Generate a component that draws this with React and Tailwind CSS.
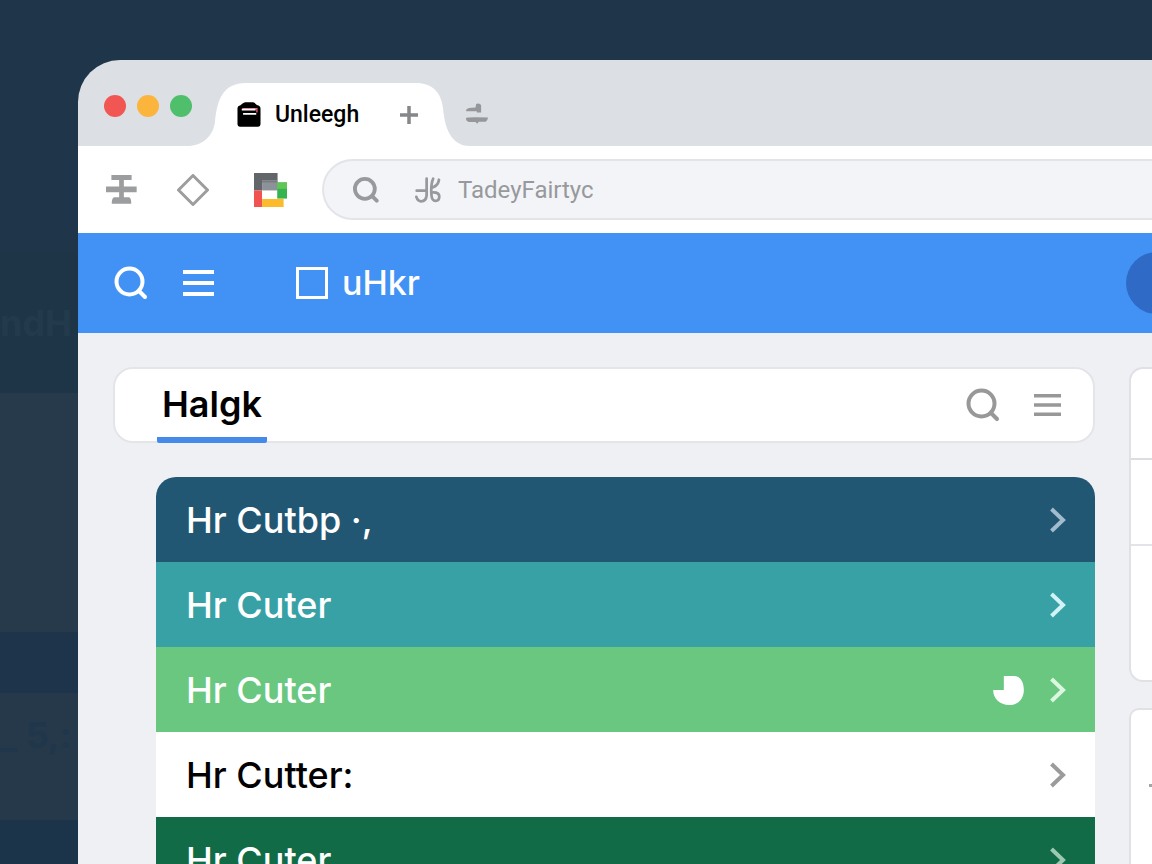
import React from 'react';
import clsx from 'clsx';

const SearchIcon = ({ className, strokeWidth = 4 }) => (
    <svg viewBox="0 0 34 34" fill="none" stroke="currentColor" strokeWidth={strokeWidth} strokeLinecap="round" className={className}>
        <circle cx="15.5" cy="15.5" r="13" />
        <path d="M25 25l6 6" />
    </svg>
);

const MenuIcon = ({ className }) => (
    <svg viewBox="0 0 30 26" fill="currentColor" preserveAspectRatio="none" className={className}>
        <path d="M0 0h30v4H0zM0 11h30v4H0zM0 22h30v4H0z" />
    </svg>
);

const ChevronIcon = ({ className }) => (
    <svg viewBox="0 0 16 26" fill="none" stroke="currentColor" strokeWidth="4" className={className}>
        <path d="M1.5 2L13 13 1.5 24" />
    </svg>
);

const PieIcon = () => (
    <svg viewBox="0 0 92 87" fill="currentColor" className="w-[31px] h-[29px] text-white">
        <path d="M32 0h30c18 0 30 16 30 42 0 28-18 45-44 45C20 87 0 68 0 42h32z" />
    </svg>
);

const rows = [
    { label: 'Hr Cutbp ·,', row: 'bg-[#225773] text-white', chevron: 'text-[#a2bbce]' },
    { label: 'Hr Cuter', row: 'bg-[#37a1a6] text-white', chevron: 'text-[#d3f2f5]' },
    { label: 'Hr Cuter', row: 'bg-[#69c780] text-white', chevron: 'text-[#dcf7df]', pie: true },
    { label: 'Hr Cutter:', row: 'bg-white text-black', chevron: 'text-[#9b9b9b]' },
    { label: 'Hr Cuter', row: 'bg-[#116b46] text-white', chevron: 'text-[#9dc8b2]' },
];

const Backdrop = () => (
    <aside className="w-[78px] shrink-0 overflow-hidden flex flex-col font-bold text-[36px] leading-none whitespace-nowrap" aria-hidden="true">
        <div className="h-[252px] shrink-0" />
        <div className="h-[141px] shrink-0 bg-[#1e3447] flex items-center text-[#233a4d]">ndH</div>
        <div className="h-[239px] shrink-0 bg-[#273a4b]" />
        <div className="h-[61px] shrink-0 bg-[#1d344b]" />
        <div className="h-[127px] shrink-0 bg-[#25394a] pt-6 text-[#20364a]">_ 5,:</div>
        <div className="grow bg-[#1b344a]" />
    </aside>
);

const TabStrip = () => (
    <div className="h-[86px] shrink-0 flex items-end bg-[#dcdfe3] rounded-tl-[42px]">
        <div className="h-[80px] w-[109px] shrink-0 pl-[26px] flex items-center gap-[11px]">
            <button aria-label="Close" className="w-[22px] h-[22px] shrink-0 rounded-full bg-[#f25653]" />
            <button aria-label="Minimize" className="w-[22px] h-[22px] shrink-0 rounded-full bg-[#fbb53c]" />
            <button aria-label="Maximize" className="w-[22px] h-[22px] shrink-0 rounded-full bg-[#4fbf6b]" />
        </div>

        {/* Active tab */}
        <div className="relative w-[283px] h-[63px] shrink-0">
            <svg viewBox="0 0 283 63" fill="#fff" className="absolute inset-0 w-full h-full">
                <path d="M0 63C16 63 26 53 28 39 30 17 36 0 59 0H229C245 0 254 9 256 25 258 50 267 63 283 63z" />
            </svg>
            <div className="relative h-full pl-[50px] flex items-center">
                <svg viewBox="0 0 72 76" className="w-6 h-[25px] shrink-0">
                    <path d="M1 18Q1 12 10 10 18 2 24 1H48Q54 2 60 9 71 11 71 20V68Q71 75 64 75H8Q1 75 1 68z" fill="#000" />
                    <path d="M16 20H60V32" fill="none" stroke="#e8607c" strokeWidth="4" />
                    <path d="M14 23H56M18 36H58" stroke="#fff" strokeWidth="5" />
                </svg>
                <span className="ml-[14px] w-[82px] font-['Roboto',sans-serif] font-medium text-[23px] leading-8 text-black">Unleegh</span>
                <button aria-label="New tab" className="ml-[43px] text-[#858789]">
                    <svg viewBox="0 0 18 18" stroke="currentColor" strokeWidth="3.5" className="w-[18px] h-[18px]">
                        <path d="M9 0v18M0 9h18" />
                    </svg>
                </button>
            </div>
        </div>
        <button aria-label="Tab options" className="-ml-1 h-[66px] text-[#95979a]">
            <svg viewBox="0 0 67 62" fill="currentColor" className="w-[22px] h-[21px]">
                <path d="M0 20Q5 13 29 13L31 2Q38-2 46 5V28H33V24H1zM0 44Q8 41 67 43 66 52 60 56H39L34 62 29 57H8Q0 54 0 48z" />
            </svg>
        </button>
    </div>
);

const AddressBar = () => (
    <div className="h-[87px] shrink-0 bg-white pl-7 flex items-center">
        <button aria-label="Split view" className="shrink-0 text-[#9b9d9f]">
            <svg viewBox="0 0 92 86" fill="currentColor" className="w-[31px] h-[29px]">
                <path d="M16 0H76V15H53V34H91V51H53V66H68Q75 67 75 85H17Q17 67 25 66H39V51H0V34H39V15H16z" />
            </svg>
        </button>
        <button aria-label="Bookmark" className="ml-10 shrink-0 text-[#9b9d9f]">
            <svg viewBox="0 0 32 32" fill="none" stroke="currentColor" strokeWidth="3" strokeLinejoin="round" className="w-8 h-8">
                <path d="M16 1.5L30.5 16 16 30.5 1.5 16z" />
            </svg>
        </button>
        <button aria-label="Apps" className="ml-[45px] shrink-0">
            <svg viewBox="0 0 98 101" className="w-[33px] h-[34px]">
                <path d="M0 0H70V23H24V52H0z" fill="#626569" />
                <path d="M24 23H70V52H24z" fill="#8c9297" />
                <path d="M24 23H70V28H24z" fill="#777c81" />
                <path d="M0 52H24V101H0z" fill="#f05350" />
                <path d="M24 77H88V101H24z" fill="#fcbb2c" />
                <path d="M69 28H98V76H69z" fill="#35b34e" />
                <path d="M69 28H98V47H69z" fill="#61c456" />
                <path d="M24 53H68V77H24z" fill="#fff" />
            </svg>
        </button>
        <div className="ml-[35px] h-[61px] grow min-w-0 pl-[29px] flex items-center rounded-l-full border-2 border-r-0 border-[#e2e4e7] bg-[#f3f4f7] text-[#97999c]">
            <SearchIcon className="w-[26px] h-[26px] shrink-0" strokeWidth={5} />
            <svg viewBox="0 0 76 76" fill="none" stroke="currentColor" strokeWidth="8" strokeLinecap="round" className="ml-9 w-[26px] h-[26px] shrink-0">
                <path d="M34 5V54Q32 71 18 71 8 71 4 58M5 40H34M53 5Q46 20 48 52 49 70 60 70 71 69 71 56 70 45 54 45M70 8Q68 24 53 30" />
            </svg>
            <input
                type="text"
                aria-label="Address"
                defaultValue="TadeyFairtyc"
                className="ml-[17px] grow min-w-0 bg-transparent outline-none font-['Roboto',sans-serif] text-[24px] leading-8"
            />
        </div>
    </div>
);

const AppHeader = () => (
    <header className="h-[100px] shrink-0 bg-[#4292f5] pl-9 flex items-center text-white">
        <button aria-label="Search" className="shrink-0">
            <SearchIcon className="w-[34px] h-[34px]" />
        </button>
        <button aria-label="Menu" className="ml-[35px] shrink-0">
            <MenuIcon className="w-[31px] h-[26px]" />
        </button>
        <label className="ml-[82px] flex items-center gap-[14px] font-['Inter',sans-serif] font-medium text-[34px] leading-none">
            <input type="checkbox" className="appearance-none w-8 h-8 border-[3px] border-white" />
            uHkr
        </label>
        <div className="ml-auto w-[26px] overflow-hidden">
            <button aria-label="Account" className="block w-[62px] h-[62px] rounded-full bg-[#2f6bc6]" />
        </div>
    </header>
);

const App = () => {
    return (
        <div className="h-screen overflow-hidden flex bg-[#1e354a] font-['Inter','Liberation_Sans',sans-serif]">
            <Backdrop />
            <div className="grow min-w-0 pt-[60px] flex flex-col">
                <TabStrip />
                <AddressBar />
                <AppHeader />

                <main className="grow min-h-0 overflow-hidden bg-[#eff0f4] pl-[35px] pt-[34px] flex gap-[34px]">
                    <section className="grow min-w-0">
                        <div className="h-[76px] pl-[42px] pr-8 flex items-center bg-white border-2 border-[#e4e5e9] rounded-[20px]">
                            <h1 className="h-[76px] w-[110px] shrink-0 pt-1 flex items-center justify-center border-b-[6px] border-[#458ae9] rounded-b-xs text-[36px] leading-none font-semibold text-black">
                                Halgk
                            </h1>
                            <div className="ml-auto flex items-center gap-[34px] text-[#989898]">
                                <button aria-label="Search list">
                                    <SearchIcon className="w-[34px] h-[34px]" />
                                </button>
                                <button aria-label="List menu">
                                    <MenuIcon className="w-[27px] h-[22px]" />
                                </button>
                            </div>
                        </div>

                        <nav className="ml-[43px] mt-[34px] rounded-t-[20px] overflow-hidden">
                            {rows.map((item, i) => (
                                <a
                                    key={i}
                                    href="#"
                                    className={clsx('h-[85px] pl-[30px] pr-[29px] pt-px flex items-center text-[36px] leading-none font-medium', item.row)}
                                >
                                    <span className="grow">{item.label}</span>
                                    {item.pie && <PieIcon />}
                                    <ChevronIcon className={clsx('ml-[26px] w-4 h-[26px]', item.chevron)} />
                                </a>
                            ))}
                        </nav>
                    </section>

                    {/* Side cards run off the right edge */}
                    <aside className="w-[23px] shrink-0 flex flex-col gap-[26px]">
                        <div className="h-[315px] shrink-0 bg-white border-2 border-r-0 border-[#e0e1e6] rounded-l-[14px]">
                            <div className="h-[91px] border-b-2 border-[#dcdde1]" />
                            <div className="h-[86px] border-b-2 border-[#e3e4e8]" />
                        </div>
                        <div className="grow bg-white border-2 border-r-0 border-b-0 border-[#e0e1e6] rounded-tl-[10px] pt-[74px]">
                            <div className="ml-auto w-[3px] h-[3px] bg-[#a5a5a5]" />
                        </div>
                    </aside>
                </main>
            </div>
        </div>
    );
};

export default App;
